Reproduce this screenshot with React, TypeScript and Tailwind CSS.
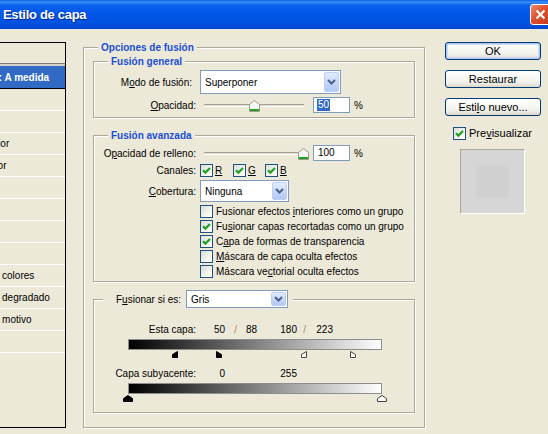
import React from 'react'

// Layer style dialog (Photoshop, XP Luna theme) – blending options pane

function CheckBox({ checked = false }: { checked?: boolean }) {
  return (
    <span className="flex h-[13px] w-[13px] shrink-0 items-center justify-center border border-[#1C5180] bg-[linear-gradient(135deg,#DCDCD7_0%,#F3F3EF_60%,#ffffff_100%)]">
      {checked && (
        <svg width="9" height="9" viewBox="0 0 9 9">
          <path d="M1 4.2 L3.4 6.6 L8 2" fill="none" stroke="#21A121" strokeWidth="2.2" />
        </svg>
      )}
    </span>
  )
}

function Dropdown({ value, className }: { value: string; className: string }) {
  return (
    <div className={`flex shrink-0 border border-[#7F9DB9] bg-white p-px ${className}`}>
      <span className="flex flex-1 items-center pl-[3px]">{value}</span>
      <span className="flex w-[15px] items-center justify-center rounded-[2px] border border-[#BAD0F8] bg-[linear-gradient(to_bottom,#E3EBFE,#C6D6FB_55%,#B2C7F7)]">
        <svg width="9" height="6" viewBox="0 0 9 6">
          <path d="M1 1 L4.5 4.5 L8 1" fill="none" stroke="#4D6185" strokeWidth="2" />
        </svg>
      </span>
    </div>
  )
}

function Slider({ pct }: { pct: number }) {
  const left = 4 + pct * 99 - 5
  return (
    <div className="relative h-[16px] w-[110px] shrink-0">
      <div className="absolute left-[4px] top-[7px] h-[3px] w-[100px] border-t border-b border-[#A5A294] border-b-white bg-[#DEDBCC]" />
      <svg className="absolute top-[3px]" style={{ left }} width="11" height="12" viewBox="0 0 11 12">
        <path d="M0.5 4.5 L5.5 0.5 L10.5 4.5 V11.5 H0.5 Z" fill="#F7F7F4" stroke="#9B9B8F" />
        <rect x="1" y="9" width="9" height="2" fill="#21A121" />
      </svg>
    </div>
  )
}

function NumBox({ value, selected = false }: { value: string; selected?: boolean }) {
  return (
    <div className="ml-[3px] flex h-[16px] w-[37px] shrink-0 items-center border border-[#7F9DB9] bg-white pl-[3px]">
      <span className={selected ? 'bg-[#316AC5] px-px leading-[12px] text-white' : 'px-px leading-[12px]'}>{value}</span>
    </div>
  )
}

function Marker({ v, kind, dark }: { v: number; kind: 'left' | 'right' | 'full'; dark: boolean }) {
  const x = (v / 255) * 254
  const fill = dark ? '#000' : '#fff'
  const stroke = dark ? '#000' : '#444'
  if (kind === 'full') {
    return (
      <svg className="absolute top-0" style={{ left: x - 5 }} width="10" height="7" viewBox="0 0 10 7">
        <path d="M5 0.5 L9.5 3.5 V6.5 H0.5 V3.5 Z" fill={fill} stroke={stroke} />
      </svg>
    )
  }
  return (
    <svg className="absolute top-0" style={{ left: kind === 'left' ? x - 6 : x }} width="6" height="7" viewBox="0 0 6 7">
      <path d={kind === 'left' ? 'M5.5 0.5 L0.5 3.5 V6.5 H5.5 Z' : 'M0.5 0.5 L5.5 3.5 V6.5 H0.5 Z'} fill={fill} stroke={stroke} />
    </svg>
  )
}

// only the tail of each name shows past the window edge; rows whose
// name ends before the edge are left blank
const styleRows = [
  '',
  '',
  'Resplandor exterior',
  'Resplandor interior',
  '',
  '',
  '',
  '',
  'Superposición de colores',
  'Superposición de degradado',
  'Superposición de motivo',
  '',
]

const options = [
  { pre: 'Fusionar efectos ', u: 'i', post: 'nteriores como un grupo', checked: false },
  { pre: 'Fu', u: 's', post: 'ionar capas recortadas como un grupo', checked: true },
  { pre: 'C', u: 'a', post: 'pa de formas de transparencia', checked: true },
  { pre: '', u: 'M', post: 'áscara de capa oculta efectos', checked: false },
  { pre: 'Máscara ve', u: 'c', post: 'torial oculta efectos', checked: false },
]

const groupBox =
  'border border-[#ACA899] shadow-[inset_1px_1px_0_#fff,1px_1px_0_#fff]'
const legendCls = 'ml-[14px] bg-[#ECE9D8] px-[3px] font-bold leading-[13px] text-[#1A4FD6]'

export default function App() {
  return (
    <div className="h-[434px] w-[548px] overflow-hidden bg-[#ECE9D8] font-['Liberation_Sans',Arial,sans-serif] text-[10px] text-black">
      {/* Title bar */}
      <div className="flex h-[29px] items-center justify-between bg-[linear-gradient(to_bottom,#0A5DE6_0%,#3D8FF7_7%,#0A62F0_18%,#0057E8_45%,#0052E0_80%,#0046CF_100%)] pl-[3px]">
        <span className="text-[13px] font-bold tracking-[-0.3px] text-white [text-shadow:1px_1px_0_#0B2A8C]">Estilo de capa</span>
        <span className="mr-[-3px] flex h-[21px] w-[21px] items-center justify-center rounded-[3px] border border-white bg-[linear-gradient(135deg,#F08A6C,#E0502F_45%,#C4391B)]">
          <svg width="11" height="11" viewBox="0 0 11 11">
            <path d="M1.5 1.5 L9.5 9.5 M9.5 1.5 L1.5 9.5" stroke="#fff" strokeWidth="2.2" />
          </svg>
        </span>
      </div>

      <div className="flex">
        {/* Styles list (clipped by the window edge) */}
        <div className="mt-[13px] flex h-[386px] w-[66px] shrink-0 flex-col overflow-hidden border-t border-r border-b border-black">
          <div className="h-[21px] shrink-0 border-b border-[#7B7B7B]" />
          <div className="h-[2px] shrink-0 bg-[#D4D0C8]" />
          <div className="flex h-[23px] shrink-0 items-center border-b border-black bg-[#316AC5] text-white">
            <span className="ml-[-94px] whitespace-nowrap font-bold">Opciones de fusión: A medida</span>
          </div>
          {styleRows.map((r, i) => (
            <div key={i} className="flex h-[22px] shrink-0 items-center border-b border-white">
              {r && <span className="ml-[-78px] whitespace-nowrap">{r}</span>}
            </div>
          ))}
        </div>

        {/* Blending options */}
        <fieldset className={`ml-[17px] mt-[12px] w-[342px] shrink-0 pb-[14px] ${groupBox}`}>
          <legend className={legendCls}>Opciones de fusión</legend>

          <fieldset className={`mx-[9px] mt-[1px] pb-[4px] ${groupBox}`}>
            <legend className={legendCls}>Fusión general</legend>
            <div className="mt-[2px] flex items-center">
              <span className="w-[102px] shrink-0 pr-[4px] text-right">
                M<u>o</u>do de fusión:
              </span>
              <Dropdown value="Superponer" className="ml-[4px] h-[24px] w-[141px]" />
            </div>
            <div className="mt-[3px] flex h-[16px] items-center">
              <span className="w-[102px] shrink-0 text-right">
                <u>O</u>pacidad:
              </span>
              <span className="ml-[4px] flex items-center">
                <Slider pct={0.5} />
                <NumBox value="50" selected />
                <span className="ml-[4px]">%</span>
              </span>
            </div>
          </fieldset>

          <fieldset className={`mx-[9px] mt-[11px] pb-[1px] ${groupBox}`}>
            <legend className={legendCls}>Fusión avanzada</legend>
            <div className="mt-[3px] flex h-[16px] items-center">
              <span className="w-[102px] shrink-0 text-right">
                O<u>p</u>acidad de relleno:
              </span>
              <span className="ml-[4px] flex items-center">
                <Slider pct={1} />
                <NumBox value="100" />
                <span className="ml-[4px]">%</span>
              </span>
            </div>
            <div className="mt-[3px] flex h-[13px] items-center">
              <span className="w-[102px] shrink-0 text-right">Canales:</span>
              <span className="ml-[4px] flex items-center">
                <span className="flex w-[33px] items-center">
                  <CheckBox checked />
                  <u className="ml-[2px]">R</u>
                </span>
                <span className="flex w-[32px] items-center">
                  <CheckBox checked />
                  <u className="ml-[2px]">G</u>
                </span>
                <span className="flex items-center">
                  <CheckBox checked />
                  <u className="ml-[2px]">B</u>
                </span>
              </span>
            </div>
            <div className="mt-[3px] flex items-center">
              <span className="w-[102px] shrink-0 text-right">
                <u>C</u>obertura:
              </span>
              <Dropdown value="Ninguna" className="ml-[4px] h-[22px] w-[89px]" />
            </div>
            <div className="ml-[106px] mt-[3px] flex flex-col">
              {options.map((o) => (
                <div key={o.post} className="flex h-[15px] items-start">
                  <CheckBox checked={o.checked} />
                  <span className="ml-[3px] whitespace-nowrap leading-[13px]">
                    {o.pre}
                    <u>{o.u}</u>
                    {o.post}
                  </span>
                </div>
              ))}
            </div>
          </fieldset>

          <fieldset className={`mx-[9px] mt-[8px] pb-[10px] ${groupBox}`}>
            <legend className="ml-[9px] flex items-center bg-[#ECE9D8] pl-[13px] pr-[5px]">
              <span>
                F<u>u</u>sionar si es:
              </span>
              <Dropdown value="Gris" className="ml-[5px] h-[18px] w-[102px]" />
            </legend>
            <div className="mt-[15px] flex h-[12px] items-center">
              <span className="w-[102px] shrink-0 text-right">Esta capa:</span>
              <span className="w-[29px] text-right">50</span>
              <span className="w-[12px] text-right text-[#9C8A5C]">/</span>
              <span className="w-[20px] text-right">88</span>
              <span className="w-[40px] text-right">180</span>
              <span className="w-[9px] text-right text-[#9C8A5C]">/</span>
              <span className="w-[27px] text-right">223</span>
            </div>
            <div className="ml-[34px] mt-[4px] h-[11px] w-[254px] border border-[#8E8E8E] bg-[linear-gradient(to_right,#000,#fff)]" />
            <div className="relative ml-[34px] mt-[1px] h-[8px] w-[254px]">
              <Marker v={50} kind="left" dark />
              <Marker v={88} kind="right" dark />
              <Marker v={180} kind="left" dark={false} />
              <Marker v={223} kind="right" dark={false} />
            </div>
            <div className="mt-[8px] flex h-[12px] items-center">
              <span className="w-[102px] shrink-0 text-right">Capa subyacente:</span>
              <span className="w-[29px] text-right">0</span>
              <span className="w-[72px] text-right">255</span>
            </div>
            <div className="ml-[34px] mt-[4px] h-[11px] w-[254px] border border-[#8E8E8E] bg-[linear-gradient(to_right,#000,#fff)]" />
            <div className="relative ml-[34px] mt-[1px] h-[7px] w-[254px]">
              <Marker v={0} kind="full" dark />
              <Marker v={255} kind="full" dark={false} />
            </div>
          </fieldset>
        </fieldset>

        {/* Buttons + preview */}
        <div className="ml-[20px] mt-[13px] flex w-[96px] shrink-0 flex-col text-[11px]">
          <button className="flex h-[18px] w-[96px] items-center justify-center rounded-[3px] border border-[#003C74] bg-[linear-gradient(to_bottom,#FFFFFF,#F2F2EC_70%,#DCD7CB)] shadow-[inset_0_0_0_1px_#A9C4F5,inset_0_0_0_2px_#CEDCF8]">
            OK
          </button>
          <button className="mt-[10px] flex h-[18px] w-[96px] items-center justify-center rounded-[3px] border border-[#003C74] bg-[linear-gradient(to_bottom,#FFFFFF,#F2F2EC_70%,#DCD7CB)]">
            Restaurar
          </button>
          <button className="mt-[10px] flex h-[18px] w-[96px] items-center justify-center rounded-[3px] border border-[#003C74] bg-[linear-gradient(to_bottom,#FFFFFF,#F2F2EC_70%,#DCD7CB)]">
            Esti<u>l</u>o nuevo...
          </button>
          <div className="ml-[8px] mt-[9px] flex items-center">
            <CheckBox checked />
            <span className="ml-[3px]">
              Pre<u>v</u>isualizar
            </span>
          </div>
          <div className="ml-[15px] mt-[7px] flex h-[65px] w-[65px] items-center justify-center border border-[#ACA899] border-r-white border-b-white bg-[#D6D6D6]">
            <div className="h-[31px] w-[31px] bg-[#D0D0D0] shadow-[0_0_3px_1px_#D2D2D2]" />
          </div>
        </div>
      </div>
    </div>
  )
}
